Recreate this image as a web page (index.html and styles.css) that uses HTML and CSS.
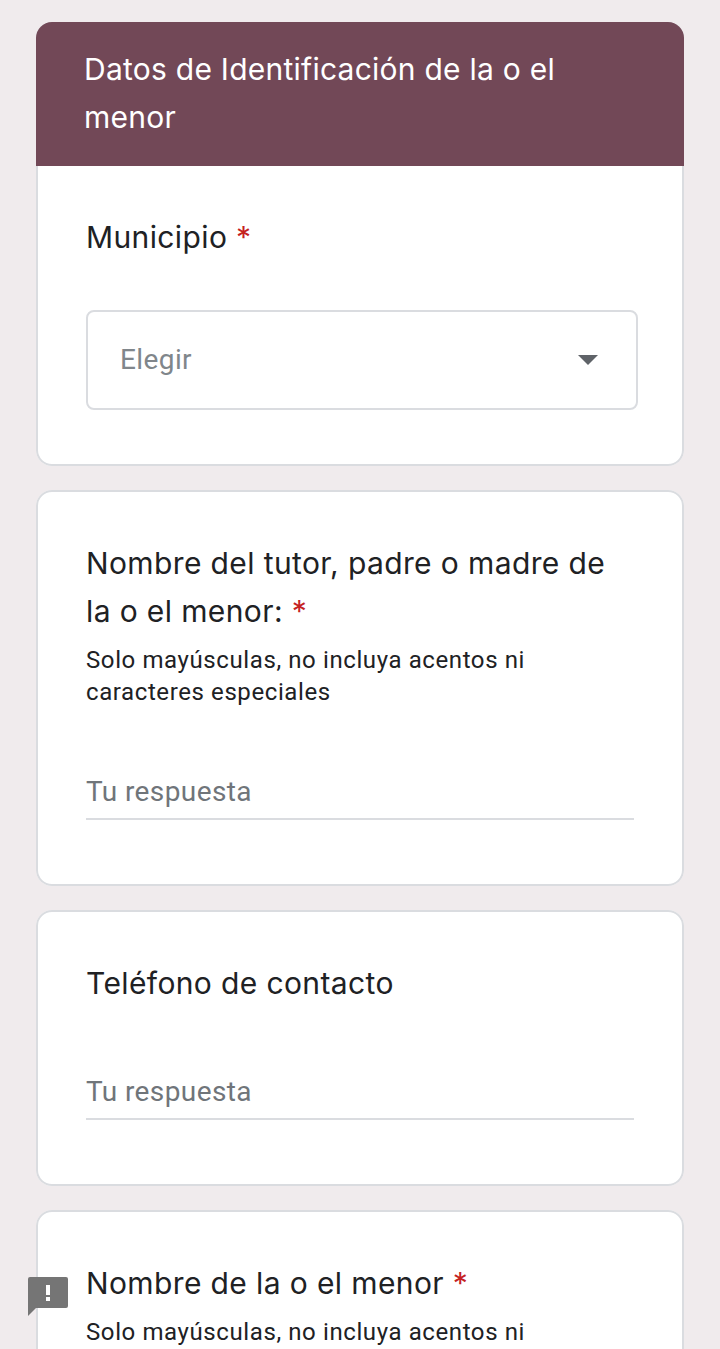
FILE: index.html
```html
<!DOCTYPE html>
<html lang="es">
<head>
    <meta charset="UTF-8">
    <meta name="viewport" content="width=device-width, initial-scale=1.0">
    <title>Datos de Identificación</title>
    <link rel="stylesheet" href="styles.css">
</head>
<body>
    <div class="form-container">
        <section class="card">
            <h1 class="card-header">Datos de Identificación de la o el menor</h1>
            <div class="card-body card-body-select">
                <div class="question">Municipio <span class="required">*</span></div>
                <div class="dropdown">
                    <span class="dropdown-label">Elegir</span>
                    <svg class="dropdown-arrow" width="20" height="10" viewBox="0 0 20 10"><path d="M0 0h20L10 10z"/></svg>
                </div>
            </div>
        </section>

        <section class="card">
            <div class="card-body">
                <div class="question">Nombre del tutor, padre o madre de la o el menor: <span class="required">*</span></div>
                <div class="description">Solo mayúsculas, no incluya acentos ni caracteres especiales</div>
                <div class="answer answer-described">Tu respuesta</div>
            </div>
        </section>

        <section class="card">
            <div class="card-body">
                <div class="question">Teléfono de contacto</div>
                <div class="answer">Tu respuesta</div>
            </div>
        </section>

        <section class="card">
            <div class="card-body">
                <div class="question">Nombre de la o el menor <span class="required">*</span></div>
                <div class="description">Solo mayúsculas, no incluya acentos ni caracteres especiales</div>
            </div>
        </section>
    </div>

    <svg class="feedback" width="40" height="40" viewBox="0 0 40 40">
        <path d="M2 0h36a2 2 0 0 1 2 2v27a2 2 0 0 1-2 2H8l-8 8V2a2 2 0 0 1 2-2z" fill="#757575"/>
        <path d="M18 8h4v10h-4zM18 20h4v4h-4z" fill="#fff"/>
    </svg>
</body>
</html>
```

FILE: styles.css
```css
html, body {
    height: 100%;
    overflow: hidden;
}

body {
    font-family: Inter, "Noto Sans", sans-serif;
    background-color: #f0ebed;
    margin: 0;
    color: #202124;
}

.form-container {
    width: 648px;
    margin: 0 auto;
    padding-top: 22px;
}

.card {
    background-color: #fff;
    border-radius: 16px;
    margin-bottom: 24px;
    overflow: hidden;
    box-shadow: inset 0 0 0 2px #dadce0;
}

.card-header {
    background-color: #724857;
    color: #fff;
    font-size: 30px;
    font-weight: 400;
    letter-spacing: 0.25px;
    line-height: 48px;
    margin: 0;
    padding: 23px 48px 25px;
}

.card-body {
    padding: 49px 50px 66px;
}

.card-body-select {
    padding-top: 47px;
    padding-bottom: 56px;
}

.question {
    font-size: 30px;
    letter-spacing: 0.38px;
    line-height: 48px;
    padding-right: 20px;
}

.required {
    color: #c5221f;
}

.description {
    font-family: Roboto, sans-serif;
    font-size: 24px;
    line-height: 32px;
    letter-spacing: 0.6px;
    margin-top: 9px;
}

.dropdown {
    display: flex;
    align-items: center;
    justify-content: space-between;
    height: 100px;
    box-sizing: border-box;
    margin-top: 49px;
    margin-right: -4px;
    padding: 0 38px 0 32px;
    border: 2px solid #dadce0;
    border-radius: 8px;
}

.dropdown-label {
    font-family: Roboto, sans-serif;
    font-size: 28px;
    letter-spacing: 0.4px;
    color: #80868b;
    margin-bottom: 2px;
}

.dropdown-arrow {
    fill: #5f6368;
}

.answer {
    font-family: Roboto, sans-serif;
    font-size: 28px;
    letter-spacing: 0.4px;
    line-height: 48px;
    color: #70757a;
    height: 48px;
    margin-top: 61px;
    padding-bottom: 2px;
    border-bottom: 2px solid #dadce0;
}

.answer-described {
    margin-top: 60px;
}

.feedback {
    position: fixed;
    left: 28px;
    top: 1277px;
}
```
